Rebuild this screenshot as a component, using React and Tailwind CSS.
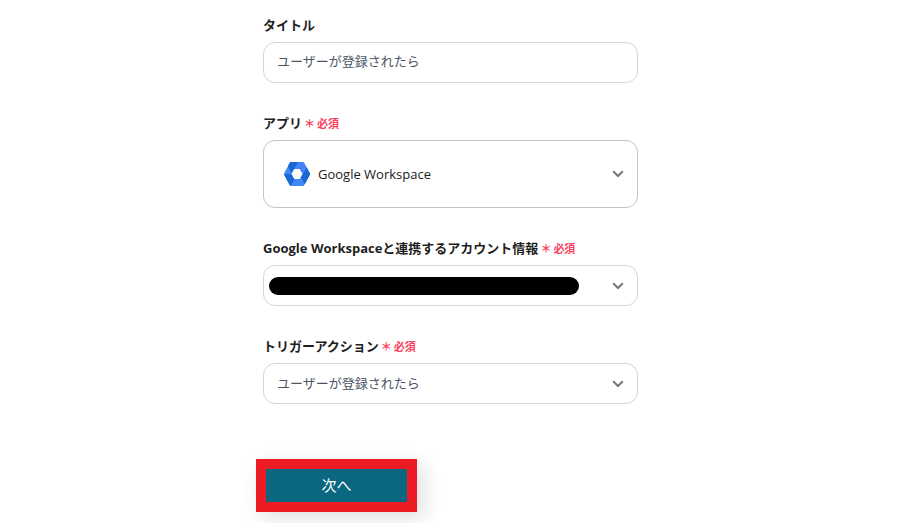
import { useState } from 'react'
import clsx from 'clsx'

const FIELD = 'block w-full appearance-none rounded-xl border bg-white text-[13px] outline-none'

function Label({ htmlFor, required, children }) {
  return (
    <label htmlFor={htmlFor} className="mb-2 flex h-[18px] items-center text-[13px] leading-[18px] font-bold whitespace-nowrap text-[#1f1f1f]">
      {children}
      {required && (
        <span className="ml-0.5 flex gap-0.5 pt-0.5 text-[11px] leading-4 text-[#fb4360]">
          <span>＊</span>
          <span>必須</span>
        </span>
      )}
    </label>
  )
}

function Chevron() {
  return (
    <svg
      viewBox="0 0 12 8"
      className="pointer-events-none absolute inset-y-0 right-3.5 my-auto h-2 w-3"
      fill="none"
      stroke="#757575"
      strokeWidth="2"
      aria-hidden="true"
    >
      <path d="M1.2 1.3 6 6l4.800-4.700" />
    </svg>
  )
}

function WorkspaceIcon() {
  return (
    <svg
      viewBox="0 0 26 24"
      className="pointer-events-none absolute inset-y-0 left-[21px] my-auto h-6 w-[26px]"
      aria-hidden="true"
    >
      <path fill="#4285f4" d="M7 0h12q.8 0 1.200.700L25.700 11q.500 1 0 2l-5.500 10.300q-.400.700-1.200.700H7q-.800 0-1.200-.700L.3 13q-.500-1 0-2L5.800.7Q6.200 0 7 0z" />
      <path fill="#1967d2" d="M7 0h7l-4 7-2.500 4L4 4l1.800-3.300Q6.200 0 7 0z" />
      <path fill="#1967d2" d="M22.800 5.600 25.700 11q.500 1 0 2l-5 9.300L17 15l2-3z" />
      <path fill="#1967d2" d="M0 12h7.500l3 5-4 6.900q-.500-.100-.700-.600L.3 13q-.300-.500-.3-1z" />
      <path fill="#fff" d="M10.300 7h5.400l2.800 5-2.800 5h-5.400l-2.800-5z" />
    </svg>
  )
}

function SelectField({ id, label, value, icon, redacted, className }) {
  return (
    <div>
      <Label htmlFor={id} required>{label}</Label>
      <div className="relative">
        <select id={id} defaultValue={value} className={clsx(FIELD, className)}>
          <option value={value}>{value}</option>
        </select>
        {icon}
        {redacted && (
          <div className="pointer-events-none absolute inset-y-0 right-[59px] left-1.5 my-auto h-[18px] rounded-full bg-black" />
        )}
        <Chevron />
      </div>
    </div>
  )
}

export default function App() {
  const [title, setTitle] = useState('ユーザーが登録されたら')

  return (
    <main className="min-h-screen bg-white pt-4 pr-px font-['Open_Sans','Noto_Sans_CJK_JP',sans-serif]">
      <form className="mx-auto w-full max-w-[375px]" onSubmit={(e) => e.preventDefault()}>
        <div className="flex flex-col gap-[31px]">
          <div>
            <Label htmlFor="title">タイトル</Label>
            <input
              id="title"
              type="text"
              value={title}
              onChange={(e) => setTitle(e.target.value)}
              className={clsx(FIELD, 'h-[41px] border-[#d1d5db] px-[13px] pb-1 text-[#4b5563]')}
            />
          </div>

          <SelectField
            id="app"
            label="アプリ"
            value="Google Workspace"
            icon={<WorkspaceIcon />}
            className="h-[68px] border-[#c4c4c4] pt-0.5 pr-10 pl-[54px] text-[#212121]"
          />

          <SelectField
            id="account"
            label="Google Workspaceと連携するアカウント情報"
            value=""
            redacted
            className="h-[41px] border-[#d1d5db] px-[13px]"
          />

          <SelectField
            id="trigger"
            label="トリガーアクション"
            value="ユーザーが登録されたら"
            className="h-[41px] border-[#d1d5db] px-[13px] text-[#4b5563]"
          />
        </div>

        {/* Highlighted submit */}
        <button
          type="submit"
          className="mt-[55px] -ml-[7px] block h-[53px] w-[161px] border-10 border-[#ed1c24] bg-[#0b6780] text-[15px] text-white shadow-[6px_6px_20px_rgba(15,23,42,0.14)]"
        >
          次へ
        </button>
      </form>
    </main>
  )
}
